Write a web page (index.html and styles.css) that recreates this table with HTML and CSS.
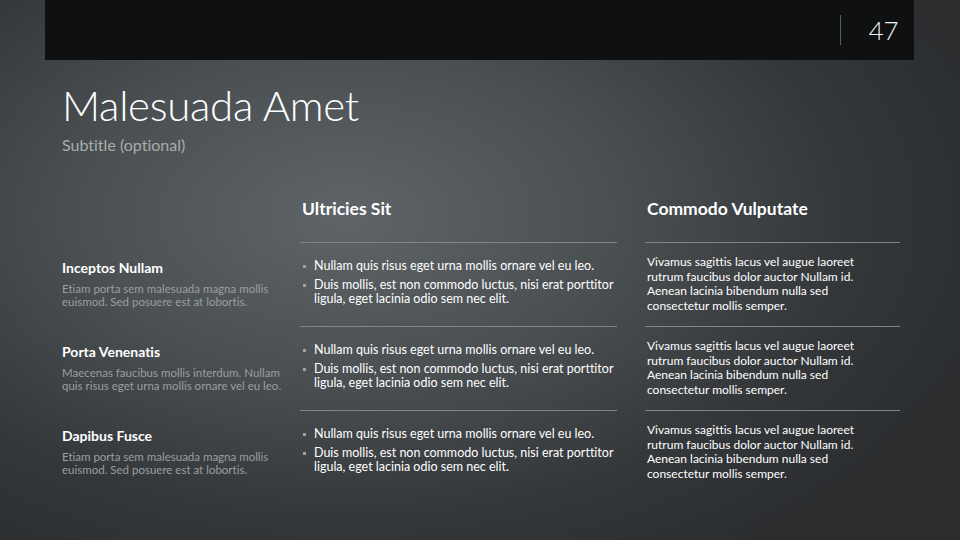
FILE: index.html
```html
<!DOCTYPE html>
<html>
<head>
<meta charset="utf-8">
<link rel="stylesheet" href="styles.css">
</head>
<body>
<div class="slide">
  <header class="topbar">
    <span class="divider"></span>
    <span class="page-num">47</span>
  </header>
  <section class="heading">
    <h1 class="title">Malesuada Amet</h1>
    <p class="subtitle">Subtitle (optional)</p>
  </section>
  <section class="table">
    <div class="col-head empty"></div>
    <div class="col-head">Ultricies Sit</div>
    <div class="col-head right">Commodo Vulputate</div>

    <div class="label">
      <h3>Inceptos Nullam</h3>
      <p>Etiam porta sem malesuada magna mollis euismod. Sed posuere est at lobortis.</p>
    </div>
    <div class="cell mid">
      <ul>
        <li>Nullam quis risus eget urna mollis ornare vel eu leo.</li>
        <li>Duis mollis, est non commodo luctus, nisi erat porttitor ligula, eget lacinia odio sem nec elit.</li>
      </ul>
    </div>
    <div class="cell right">
      <p>Vivamus sagittis lacus vel augue laoreet rutrum faucibus dolor auctor Nullam id. Aenean lacinia bibendum nulla sed consectetur mollis semper.</p>
    </div>

    <div class="label">
      <h3>Porta Venenatis</h3>
      <p>Maecenas faucibus mollis interdum. Nullam quis risus eget urna mollis ornare vel eu leo.</p>
    </div>
    <div class="cell mid">
      <ul>
        <li>Nullam quis risus eget urna mollis ornare vel eu leo.</li>
        <li>Duis mollis, est non commodo luctus, nisi erat porttitor ligula, eget lacinia odio sem nec elit.</li>
      </ul>
    </div>
    <div class="cell right">
      <p>Vivamus sagittis lacus vel augue laoreet rutrum faucibus dolor auctor Nullam id. Aenean lacinia bibendum nulla sed consectetur mollis semper.</p>
    </div>

    <div class="label">
      <h3>Dapibus Fusce</h3>
      <p>Etiam porta sem malesuada magna mollis euismod. Sed posuere est at lobortis.</p>
    </div>
    <div class="cell mid">
      <ul>
        <li>Nullam quis risus eget urna mollis ornare vel eu leo.</li>
        <li>Duis mollis, est non commodo luctus, nisi erat porttitor ligula, eget lacinia odio sem nec elit.</li>
      </ul>
    </div>
    <div class="cell right">
      <p>Vivamus sagittis lacus vel augue laoreet rutrum faucibus dolor auctor Nullam id. Aenean lacinia bibendum nulla sed consectetur mollis semper.</p>
    </div>
  </section>
</div>
</body>
</html>
```
FILE: styles.css
```css
* { box-sizing: border-box; }
html, body { margin: 0; padding: 0; }
body {
  width: 960px;
  height: 540px;
  overflow: hidden;
  font-family: "Lato", "Noto Sans", sans-serif;
  font-variant-ligatures: none;
  color: #ffffff;
}
.slide {
  width: 960px;
  height: 540px;
  background: radial-gradient(ellipse 70% 75% at 36% 40%, #5e6467 0%, #4a4f52 40%, #34373a 75%, #2b2d2f 100%);
}
.topbar {
  margin: 0 46px 0 45px;
  height: 60px;
  background: #0f1011;
  display: flex;
  align-items: center;
  justify-content: flex-end;
  padding-right: 16px;
}
.divider {
  width: 1px;
  height: 30px;
  background: #5a5d5f;
  margin-right: 28px;
}
.page-num {
  font-weight: 300;
  font-size: 26px;
  letter-spacing: -0.5px;
  line-height: 30px;
  color: #f2f2f2;
}
.heading {
  padding: 21px 0 0 62px;
}
.title {
  margin: 0;
  font-weight: 300;
  font-size: 42px;
  line-height: 48px;
  letter-spacing: -0.3px;
  color: #ffffff;
}
.subtitle {
  margin: 5px 0 0;
  font-size: 16px;
  line-height: 22px;
  color: #a9acae;
}
.table {
  margin-top: 40px;
  display: grid;
  grid-template-columns: 210px 317px 255px;
  column-gap: 28px;
  padding-left: 62px;
  grid-template-rows: 46px 84px 84px 84px;
}
.col-head {
  padding: 1px 0 0 2px;
  font-size: 17.5px;
  font-weight: 700;
  line-height: 24px;
  color: #ffffff;
}
.label {
  padding-top: 17px;
}
.label h3 {
  margin: 0;
  font-size: 14px;
  font-weight: 700;
  line-height: 18px;
  color: #ffffff;
}
.label p {
  margin: 5px 0 0;
  font-size: 11.5px;
  line-height: 13px;
  color: #9a9ea1;
  width: 226px;
}
.cell {
  border-top: 1px solid #80858a;
}
.cell.mid {
  padding: 16px 0 0 2px;
}
.cell.mid ul {
  margin: 0;
  padding: 0;
  list-style: none;
}
.cell.mid li {
  position: relative;
  padding-left: 12px;
  font-size: 12.5px;
  line-height: 14px;
  margin-bottom: 5px;
  color: #ffffff;
}
.cell.mid li::before {
  content: "";
  position: absolute;
  left: 1px;
  top: 6px;
  width: 3px;
  height: 3px;
  background: #9ea2a5;
}
.cell.right {
  padding: 12px 0 0 2px;
}
.cell.right p {
  margin: 0;
  font-size: 12px;
  line-height: 14.5px;
  width: 225px;
  color: #ffffff;
}
```
